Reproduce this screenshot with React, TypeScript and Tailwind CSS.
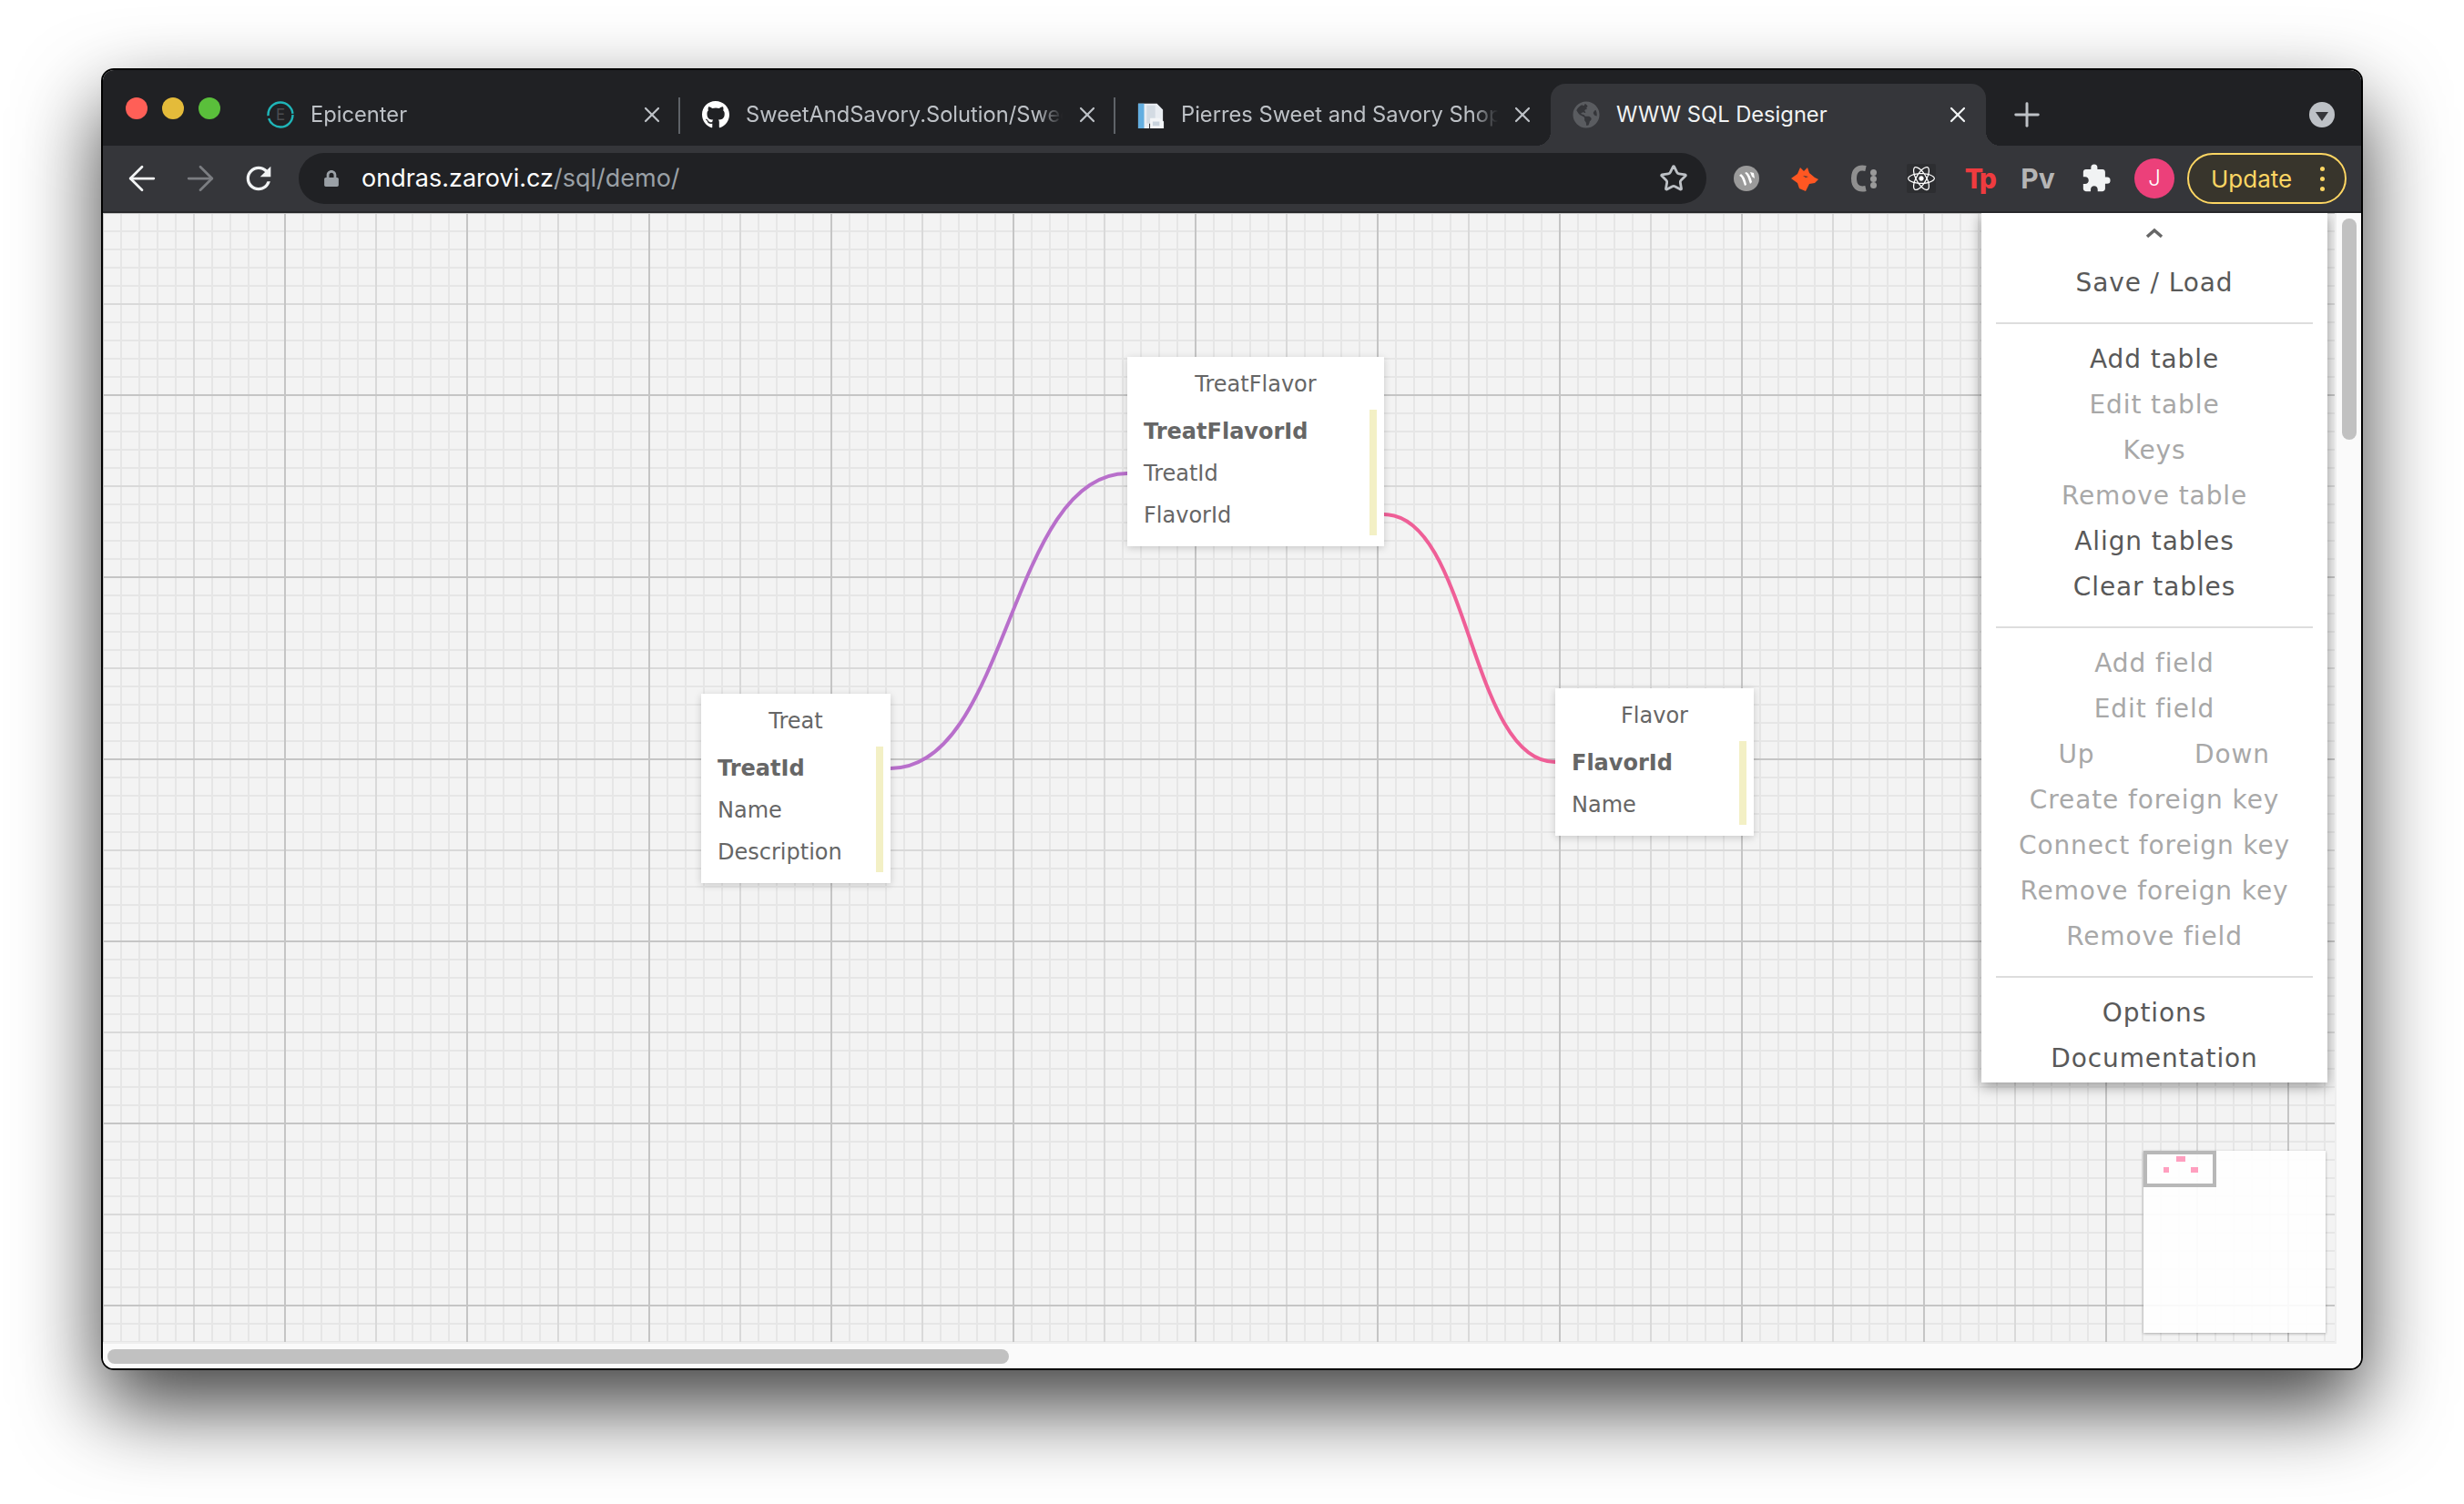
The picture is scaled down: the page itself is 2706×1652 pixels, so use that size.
import { ArrowLeft, ArrowRight, Plus, Star, X } from "lucide-react";
import { FaGithub, FaGlobeAmericas, FaLock, FaReact } from "react-icons/fa";
import { MdExtension, MdRefresh } from "react-icons/md";

const menuFont = "font-['DejaVu_Sans',sans-serif]";

function EpicenterIcon() {
  return (
    <svg viewBox="0 0 30 30" className="h-[30px] w-[30px]">
      <circle cx="15" cy="15" r="13.5" fill="none" stroke="#1fb5b8" strokeWidth="2.4" strokeDasharray="38 3 42 2" />
      <text x="15" y="21" textAnchor="middle" fontSize="17" fill="#4a4c50" fontFamily="Inter, sans-serif">E</text>
    </svg>
  );
}

function DocIcon() {
  return (
    <svg viewBox="0 0 32 32" className="h-[32px] w-[32px]">
      <path d="M1 3h22l7 7v16H14v6H1z" fill="#e9edf2" />
      <path d="M1 3h7v29H1z" fill="#63aee0" />
      <path d="M11 5h10v21H11z" fill="#d3dbe3" />
      <path d="M15 20h11l5 4v8H15z" fill="#f3f5f7" />
      <path d="M18 24h8v5h-8z" fill="#c9d3dd" />
    </svg>
  );
}

function Tab({
  icon,
  title,
  active,
  divider,
}: {
  icon: React.ReactNode;
  title: string;
  active?: boolean;
  divider?: boolean;
}) {
  return (
    <div
      className={
        active
          ? "relative flex h-[68px] w-[478px] items-center rounded-t-[16px] bg-[#35363a] pl-[24px] text-[#f1f3f4]"
          : "relative flex h-[68px] w-[478px] items-center pl-[24px] text-[#bdc1c6]"
      }
    >
      <div className="flex w-[30px] justify-center">{icon}</div>
      <div
        className={
          active
            ? "ml-[18px] w-[348px] overflow-hidden whitespace-nowrap text-[23.7px]"
            : "ml-[18px] w-[348px] overflow-hidden whitespace-nowrap text-[23.7px] [mask-image:linear-gradient(to_right,black_92%,transparent)]"
        }
      >
        {title}
      </div>
      <X className="ml-[13px]" size={28} strokeWidth={1.9} />
      {divider && <div className="absolute right-0 top-[15px] h-[40px] w-[2px] bg-[#5f6368]" />}
      {active && (
        <>
          <div className="absolute bottom-0 left-[-16px] h-4 w-4 bg-[radial-gradient(circle_at_0_0,transparent_16px,#35363a_16px)]" />
          <div className="absolute bottom-0 right-[-16px] h-4 w-4 bg-[radial-gradient(circle_at_100%_0,transparent_16px,#35363a_16px)]" />
        </>
      )}
    </div>
  );
}

function TabStrip() {
  return (
    <div className="flex h-[83px] items-end bg-[#202124]">
      <div className="mt-[30px] flex w-[156px] gap-4 self-start pl-[25px]">
        <div className="h-6 w-6 rounded-full bg-[#ff5f57]" />
        <div className="h-6 w-6 rounded-full bg-[#e4bb3a]" />
        <div className="h-6 w-6 rounded-full bg-[#5abf3b]" />
      </div>
      <Tab icon={<EpicenterIcon />} title="Epicenter" divider />
      <Tab icon={<FaGithub size={32} className="text-white" />} title="SweetAndSavory.Solution/SweetAndSavory" divider />
      <Tab icon={<DocIcon />} title="Pierres Sweet and Savory Shop" />
      <Tab icon={<FaGlobeAmericas size={30} className="text-[#5a5c60]" />} title="WWW SQL Designer" active />
      <div className="ml-[24px] flex h-[68px] items-center text-[#bdc1c6]">
        <Plus size={42} strokeWidth={1.7} />
      </div>
      <div className="ml-auto mr-[29px] flex h-[68px] items-center">
        <div className="flex h-[28px] w-[28px] items-center justify-center rounded-full bg-[#bdc1c6]">
          <div className="mt-[3px] h-0 w-0 border-x-[7px] border-t-[10px] border-x-transparent border-t-[#35363a]" />
        </div>
      </div>
    </div>
  );
}

function ExtSlot({ children }: { children: React.ReactNode }) {
  return <div className="flex h-[48px] w-[64px] items-center justify-center">{children}</div>;
}

function Toolbar() {
  return (
    <div className="flex h-[74px] items-center border-b-2 border-[#27282b] bg-[#35363a]">
      <div className="flex pl-[11px]">
        <div className="flex w-[64px] justify-center text-[#f1f3f4]">
          <ArrowLeft size={44} strokeWidth={1.5} />
        </div>
        <div className="flex w-[64px] justify-center text-[#7b7d81]">
          <ArrowRight size={44} strokeWidth={1.5} />
        </div>
        <div className="flex w-[64px] items-center justify-center text-[#f1f3f4]">
          <MdRefresh size={40} />
        </div>
      </div>
      <div className="ml-[12px] flex h-14 w-[1546px] items-center rounded-full bg-[#202124] pl-[27px] pr-[20px]">
        <FaLock size={18} className="text-[#9aa0a6]" />
        <div className="ml-[24px] whitespace-nowrap text-[27px] text-white">
          ondras.zarovi.cz<span className="text-[#9aa0a6]">/sql/demo/</span>
        </div>
        <Star className="ml-auto text-[#bdc1c6]" size={32} strokeWidth={2.1} />
      </div>
      <div className="ml-[12px] flex items-center">
        <ExtSlot>
          <svg viewBox="0 0 28 28" className="h-[28px] w-[28px]">
            <circle cx="14" cy="14" r="14" fill="#9a9a9a" />
            <path d="M6 11c3 1 4 5 6 11l2-1c-1-6-3-10-6-12zM12 8c3 2 4 6 6 12l2-2c-1-5-3-9-6-11zM18 7l4 1 1 6-3-2z" fill="#fff" />
          </svg>
        </ExtSlot>
        <ExtSlot>
          <svg viewBox="0 0 30 27" className="h-[27px] w-[30px]">
            <path d="M0 13L7 8 10 1l4 4 4-4 2 6 6 5 4 2-4 4-6 1-4 8-7-3-2-6z" fill="#ff5722" />
            <path d="M13 10l6 1-3 1z" fill="#35363a" />
          </svg>
        </ExtSlot>
        <ExtSlot>
          <div className="flex items-center">
            <svg viewBox="0 0 18 30" className="h-[30px] w-[18px]">
              <path d="M17 4C8 2 4 7 4 15s4 13 13 11" fill="none" stroke="#8f8f8f" strokeWidth="6" />
            </svg>
            <div className="ml-[4px] flex flex-col">
              <div className="h-[7px] w-[7px] rounded-full bg-[#9a9a9a]" />
              <div className="h-[7px] w-[7px] rounded-full bg-[#9a9a9a]" />
              <div className="h-[7px] w-[7px] rounded-full bg-[#9a9a9a]" />
            </div>
          </div>
        </ExtSlot>
        <ExtSlot>
          <div className="flex h-8 w-8 items-center justify-center rounded-[2px] bg-[#2d2e31]">
            <FaReact size={30} className="text-white" />
          </div>
        </ExtSlot>
        <ExtSlot>
          <span className="text-[30px] font-extrabold tracking-[-2.5px] text-[#ef3b3f]">Tp</span>
        </ExtSlot>
        <ExtSlot>
          <span className="text-[30px] font-bold text-[#b5b5b5]">Pv</span>
        </ExtSlot>
        <ExtSlot>
          <MdExtension size={34} className="text-[#f1f3f4]" />
        </ExtSlot>
        <ExtSlot>
          <div className="flex h-[44px] w-[44px] items-center justify-center rounded-full bg-[#ec407a] text-[24px] font-light text-white">J</div>
        </ExtSlot>
      </div>
      <div className="ml-[4px] flex h-14 w-[175px] items-center rounded-full border-2 border-[#fdd663] bg-[#38352c] pl-[24px] pr-[22px] text-[26px] text-[#fdd663]">
        Update
        <div className="ml-auto flex flex-col gap-[6px]">
          <div className="h-[5px] w-[5px] rounded-full bg-[#fdd663]" />
          <div className="h-[5px] w-[5px] rounded-full bg-[#fdd663]" />
          <div className="h-[5px] w-[5px] rounded-full bg-[#fdd663]" />
        </div>
      </div>
    </div>
  );
}

function DbTable({
  name,
  fields,
  className,
}: {
  name: string;
  fields: { label: string; primary?: boolean }[];
  className: string;
}) {
  return (
    <div className={"absolute flex flex-col bg-white pt-[8px] pb-[12px] text-[24px] text-[#666] shadow-[0_2px_8px_rgba(0,0,0,0.18)] " + className}>
      <div className="mb-[6px] flex h-[44px] items-center justify-center">{name}</div>
      <div className="flex">
        <div className="flex-1 pl-[18px]">
          {fields.map((field) => (
            <div key={field.label} className={field.primary ? "flex h-[46px] items-center pt-[2px] font-bold" : "flex h-[46px] items-center pt-[2px]"}>
              {field.label}
            </div>
          ))}
        </div>
        <div className="mr-2 w-2 bg-[#f3f0c5]" />
      </div>
    </div>
  );
}

function MenuItem({ label, disabled }: { label: string; disabled?: boolean }) {
  return (
    <div className={disabled ? "flex h-[50px] items-center justify-center text-[#a8a8a8]" : "flex h-[50px] items-center justify-center text-[#595959]"}>
      {label}
    </div>
  );
}

function MenuDivider() {
  return <div className="mx-4 mb-[14px] mt-[18px] h-[2px] bg-[#dddddd]" />;
}

function Menu() {
  return (
    <div className="absolute right-[8px] top-0 w-[380px] bg-white pb-[1px] text-[28px] tracking-[0.9px] shadow-[0_4px_14px_rgba(0,0,0,0.4)]">
      <div className="flex h-[52px] justify-center pt-[16px]">
        <svg viewBox="0 0 20 12" className="h-[12px] w-[20px]">
          <path d="M2 10L10 3l8 7" fill="none" stroke="#666" strokeWidth="3.5" />
        </svg>
      </div>
      <MenuItem label="Save / Load" />
      <MenuDivider />
      <MenuItem label="Add table" />
      <MenuItem label="Edit table" disabled />
      <MenuItem label="Keys" disabled />
      <MenuItem label="Remove table" disabled />
      <MenuItem label="Align tables" />
      <MenuItem label="Clear tables" />
      <MenuDivider />
      <MenuItem label="Add field" disabled />
      <MenuItem label="Edit field" disabled />
      <div className="flex h-[50px] items-center justify-center text-[#a8a8a8]">
        <span className="w-[171px] text-center">Up</span>
        <span className="w-[171px] text-center">Down</span>
      </div>
      <MenuItem label="Create foreign key" disabled />
      <MenuItem label="Connect foreign key" disabled />
      <MenuItem label="Remove foreign key" disabled />
      <MenuItem label="Remove field" disabled />
      <MenuDivider />
      <MenuItem label="Options" />
      <MenuItem label="Documentation" />
    </div>
  );
}

function Minimap() {
  return (
    <div className="absolute left-[2241px] top-[1030px] h-[200px] w-[200px] bg-white/90 shadow-[0_1px_3px_rgba(0,0,0,0.3)]">
      <div className="absolute left-0 top-0 h-[40px] w-[80px] border-4 border-[#b8b8b8]" />
      <div className="absolute left-[36px] top-[6px] h-[6px] w-[10px] bg-[#ff9fbf]" />
      <div className="absolute left-[22px] top-[18px] h-[6px] w-[6px] bg-[#ff9fbf]" />
      <div className="absolute left-[52px] top-[18px] h-[6px] w-[8px] bg-[#ff9fbf]" />
    </div>
  );
}

function Canvas() {
  return (
    <div className="relative flex-1 overflow-hidden border-b-2 border-r-2 border-[#eeeeee] [background:linear-gradient(to_right,#c5c5c5_2px,transparent_2px)_199px_0/200px_200px,linear-gradient(to_bottom,#c5c5c5_2px,transparent_2px)_0_199px/200px_200px,linear-gradient(to_right,#d9d9d9_2px,transparent_2px)_99px_0/100px_100px,linear-gradient(to_bottom,#d9d9d9_2px,transparent_2px)_0_99px/100px_100px,linear-gradient(to_right,#e6e6e6_2px,transparent_2px)_19px_0/20px_20px,linear-gradient(to_bottom,#e6e6e6_2px,transparent_2px)_0_19px/20px_20px,#f3f3f3]">
      <svg viewBox="113 234 2453 1242" className="absolute left-0 top-0 h-[1242px] w-[2453px]">
        <path d="M978 844C1108 844 1108 520 1238 520" fill="none" stroke="#b86fcb" strokeWidth="4" />
        <path d="M1520 565C1614 565 1614 837 1708 837" fill="none" stroke="#ef5f97" strokeWidth="4" />
      </svg>
      <DbTable
        name="TreatFlavor"
        className="left-[1125px] top-[158px] w-[282px]"
        fields={[{ label: "TreatFlavorId", primary: true }, { label: "TreatId" }, { label: "FlavorId" }]}
      />
      <DbTable
        name="Treat"
        className="left-[657px] top-[528px] w-[208px]"
        fields={[{ label: "TreatId", primary: true }, { label: "Name" }, { label: "Description" }]}
      />
      <DbTable
        name="Flavor"
        className="left-[1595px] top-[522px] w-[218px]"
        fields={[{ label: "FlavorId", primary: true }, { label: "Name" }]}
      />
      <Menu />
      <Minimap />
    </div>
  );
}

export default function App() {
  return (
    <div className="h-[1652px] w-[2706px] overflow-hidden bg-white pl-[111px] pt-[75px] font-['Inter',sans-serif]">
      <div className="flex h-[1430px] w-[2484px] flex-col overflow-hidden rounded-[14px] border-2 border-black shadow-[0_40px_90px_rgba(0,0,0,0.75)]">
        <TabStrip />
        <Toolbar />
        <div className={"flex flex-1 flex-col bg-[#fafafa] " + menuFont}>
          <div className="flex flex-1">
            <Canvas />
            <div className="w-[27px] pl-[6px] pt-[6px]">
              <div className="h-[243px] w-4 rounded-full bg-[#c1c1c1]" />
            </div>
          </div>
          <div className="h-[27px] pl-[5px] pt-[6px]">
            <div className="h-4 w-[990px] rounded-full bg-[#c1c1c1]" />
          </div>
        </div>
      </div>
    </div>
  );
}
